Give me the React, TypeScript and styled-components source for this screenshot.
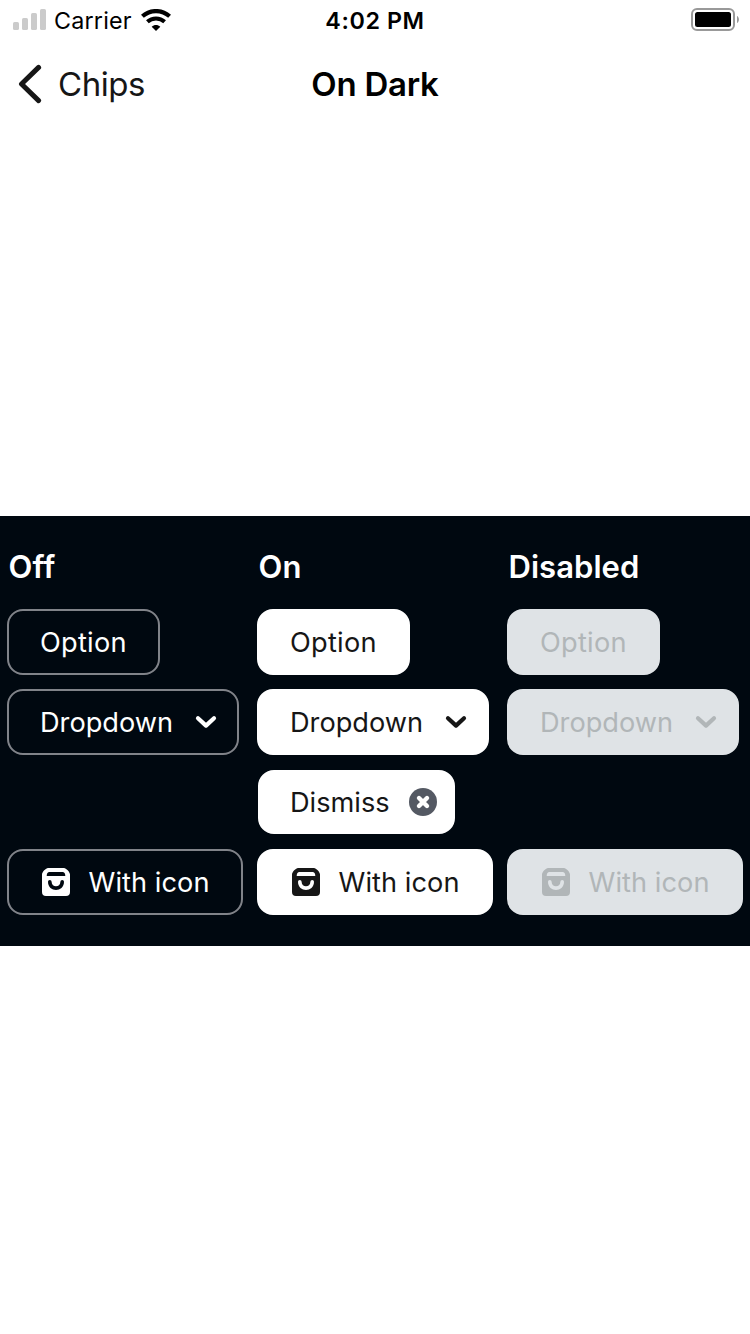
import React from "react";
import styled, { createGlobalStyle, css } from "styled-components";

type Variant = "off" | "on" | "disabled";
type Kind = "option" | "dropdown" | "dismiss" | "icon";

const GlobalStyle = createGlobalStyle`
  * { box-sizing: border-box; }
  body {
    margin: 0;
    background: #fff;
    font-family: Inter, "Liberation Sans", sans-serif;
    -webkit-font-smoothing: antialiased;
  }
`;

const Screen = styled.div`
  display: flex;
  flex-direction: column;
  width: 750px;
  height: 1334px;
  background: #fff;
  overflow: hidden;
`;

const StatusBar = styled.header`
  display: grid;
  grid-template-columns: 1fr auto 1fr;
  align-items: center;
  height: 40px;
  padding: 0 10px 0 13px;
  color: #000;
`;

const Carrier = styled.div`
  display: flex;
  align-items: center;
  font-size: 23.3px;
  line-height: 38px;
  letter-spacing: 0.2px;
`;

const CarrierName = styled.span`
  width: 78px;
  margin: 0 9px 0 8px;
  padding-top: 2px;
  white-space: nowrap;
`;

const Time = styled.div`
  margin-left: -3px;
  padding-top: 2px;
  font-size: 23.3px;
  line-height: 38px;
  font-weight: 570;
  letter-spacing: 0.6px;
`;

const BatterySlot = styled.div`
  display: flex;
  justify-content: flex-end;
`;

const NavBar = styled.nav`
  display: grid;
  grid-template-columns: 1fr auto 1fr;
  align-items: center;
  height: 88px;
  padding: 0 18px;
`;

const BackButton = styled.div`
  display: flex;
  align-items: center;
  gap: 16px;
  color: #161616;
  font-size: 33px;
  line-height: 44px;
  letter-spacing: -0.45px;
`;

const Title = styled.h1`
  margin: 0;
  color: #000;
  font-size: 33px;
  line-height: 44px;
  font-weight: 600;
  letter-spacing: -0.25px;
`;

const Panel = styled.main`
  display: grid;
  grid-template-columns: repeat(3, 250px);
  height: 430px;
  margin-top: 388px;
  padding-top: 29px;
  background: #000810;
`;

const Column = styled.section`
  display: flex;
  flex-direction: column;
  align-items: flex-start;
  padding-left: 7px;
`;

const Heading = styled.h2`
  margin: 0 0 20px 1.5px;
  height: 44px;
  color: #fff;
  font-size: 31px;
  line-height: 44px;
  font-weight: 600;
  letter-spacing: 0.05px;
`;

const Slot = styled.div`
  display: flex;
  align-items: center;
  height: 66px;
  margin-bottom: 14px;
`;

const variants = {
  off: css`
    color: #fff;
    background: transparent;
    border-color: #808389;
  `,
  on: css`
    color: #161616;
    background: #fff;
    border-color: #fff;
  `,
  disabled: css`
    color: #b1b6b8;
    background: #dfe3e6;
    border-color: #dfe3e6;
  `,
};

const widths: Record<Kind, number> = { option: 153, dropdown: 232, dismiss: 197, icon: 236 };

const Chip = styled.div<{ $variant: Variant; $kind: Kind }>`
  display: flex;
  align-items: center;
  justify-content: space-between;
  width: ${(p) => widths[p.$kind]}px;
  height: ${(p) => (p.$kind === "dismiss" ? 64 : 66)}px;
  margin-left: ${(p) => (p.$kind === "dismiss" ? 1 : 0)}px;
  padding: 0 ${(p) => ({ option: 31, dropdown: 20, dismiss: 16, icon: 31.5 })[p.$kind]}px 0
    ${(p) => (p.$kind === "dismiss" ? 30 : p.$kind === "icon" ? 33 : 31)}px;
  border: 2px solid;
  border-radius: 16px;
  font-size: 27.2px;
  line-height: 40px;
  white-space: nowrap;
  ${(p) => variants[p.$variant]}
`;

const Label = styled.span<{ $spacing: number }>`
  padding-top: 2px;
  letter-spacing: ${(p) => p.$spacing}px;
`;

const SignalIcon = () => (
  <svg width="33" height="22" viewBox="0 0 33 22" fill="#cbcbcb">
    <rect x="0" y="13" width="6" height="8" rx="1.6" />
    <rect x="9" y="9" width="6" height="12" rx="1.6" />
    <rect x="18" y="4" width="6" height="17" rx="1.6" />
    <rect x="27" y="0" width="6" height="21" rx="1.6" />
  </svg>
);

const WifiIcon = () => (
  <svg width="30" height="22" viewBox="0 0 30 22" fill="none" stroke="#000">
    <path d="M1.4 7.3C9 .3 21 .3 28.6 7.3" strokeWidth="4.2" />
    <path d="M6.4 12.7C11.2 8.3 18.8 8.3 23.6 12.7" strokeWidth="4" />
    <path d="M15 22L10.7 17.700C13.100 15.400 16.900 15.400 19.300 17.700Z" fill="#000" stroke="none" />
  </svg>
);

const BatteryIcon = () => (
  <svg width="49" height="24" viewBox="0 0 49 24">
    <rect x="1" y="1" width="42" height="21" rx="5" fill="none" stroke="#999" strokeWidth="2" />
    <rect x="4" y="4" width="36" height="15" rx="2.5" fill="#000" />
    <path d="M46 8C48.6 9.2 48.6 13.8 46 15Z" fill="#999" />
  </svg>
);

const BackIcon = () => (
  <svg width="24" height="40" viewBox="0 0 24 40" fill="none" stroke="#161616" strokeWidth="5" strokeLinecap="round" strokeLinejoin="round">
    <path d="M20.6 3.4L3.5 20L20.6 36.6" />
  </svg>
);

const ChevronIcon = () => (
  <svg width="22" height="14" viewBox="0 0 22 14" fill="none" stroke="currentColor" strokeWidth="4.2" strokeLinecap="round" strokeLinejoin="round">
    <path d="M3 3.200L11 10.600L19 3.200" />
  </svg>
);

const DismissIcon = () => (
  <svg width="28" height="28" viewBox="0 0 28 28">
    <circle cx="14" cy="14" r="14" fill="#545963" />
    <path d="M10 10L18 18M18 10L10 18" stroke="#fff" strokeWidth="4.4" strokeLinecap="round" />
  </svg>
);

const BagIcon = () => (
  <svg width="28" height="28" viewBox="0 0 28 28" fill="currentColor" fillRule="evenodd">
    <path d="M6 0H22C24 0 28 4 28 6.500V24Q28 28 24 28H4Q0 28 0 24V6.500C0 4 4 0 6 0ZM7 4Q4.700 4.500 4.700 8H23.300Q23.300 4.500 21 4ZM6 13.700C6 24.600 22 24.600 22 13.700A1.800 1.800 0 0 0 18.400 13.700C18.400 19.800 9.600 19.800 9.600 13.700A1.800 1.800 0 0 0 6 13.700Z" />
  </svg>
);

const OptionChip = ({ variant }: { variant: Variant }) => (
  <Slot>
    <Chip $variant={variant} $kind="option">
      <Label $spacing={0.25}>Option</Label>
    </Chip>
  </Slot>
);

const DropdownChip = ({ variant }: { variant: Variant }) => (
  <Slot>
    <Chip $variant={variant} $kind="dropdown">
      <Label $spacing={0}>Dropdown</Label>
      <ChevronIcon />
    </Chip>
  </Slot>
);

const DismissChip = () => (
  <Chip $variant="on" $kind="dismiss">
    <Label $spacing={0}>Dismiss</Label>
    <DismissIcon />
  </Chip>
);

const IconChip = ({ variant }: { variant: Variant }) => (
  <Slot>
    <Chip $variant={variant} $kind="icon">
      <BagIcon />
      <Label $spacing={0.05}>With icon</Label>
    </Chip>
  </Slot>
);

const columns: { title: string; variant: Variant }[] = [
  { title: "Off", variant: "off" },
  { title: "On", variant: "on" },
  { title: "Disabled", variant: "disabled" },
];

export default function App() {
  return (
    <Screen>
      <GlobalStyle />
      <StatusBar>
        <Carrier>
          <SignalIcon />
          <CarrierName>Carrier</CarrierName>
          <WifiIcon />
        </Carrier>
        <Time>4:02 PM</Time>
        <BatterySlot>
          <BatteryIcon />
        </BatterySlot>
      </StatusBar>
      <NavBar>
        <BackButton>
          <BackIcon />
          <span>Chips</span>
        </BackButton>
        <Title>On Dark</Title>
      </NavBar>
      <Panel>
        {columns.map(({ title, variant }) => (
          <Column key={title}>
            <Heading>{title}</Heading>
            <OptionChip variant={variant} />
            <DropdownChip variant={variant} />
            <Slot>{variant === "on" && <DismissChip />}</Slot>
            <IconChip variant={variant} />
          </Column>
        ))}
      </Panel>
    </Screen>
  );
}
